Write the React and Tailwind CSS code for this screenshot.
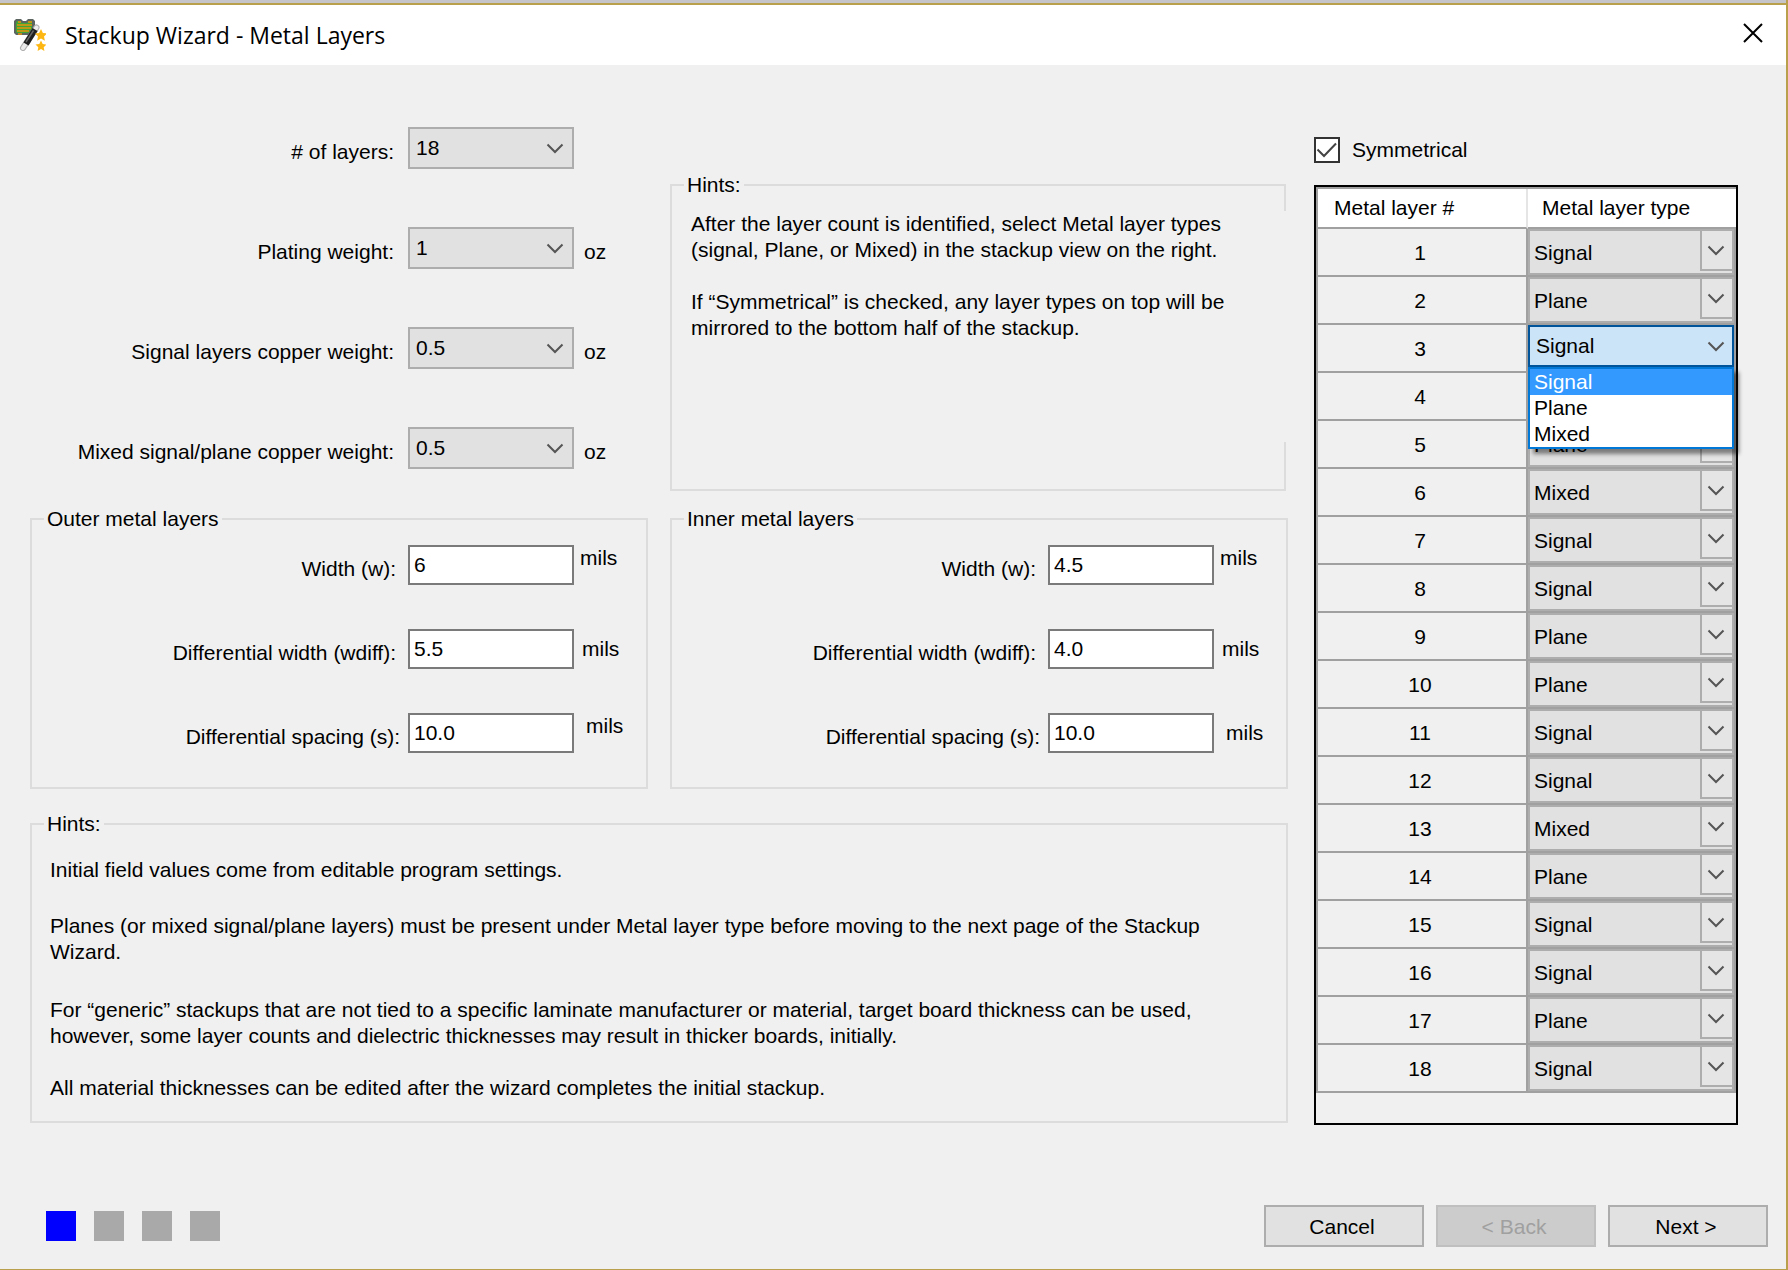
import React, { Component } from 'react';

const LAYERS = [
  'Signal', 'Plane', 'Signal', 'Signal', 'Plane', 'Mixed',
  'Signal', 'Signal', 'Plane', 'Plane', 'Signal', 'Signal',
  'Mixed', 'Plane', 'Signal', 'Signal', 'Plane', 'Signal',
];

const TYPES = ['Signal', 'Plane', 'Mixed'];

const Chevron = () => (
  <svg width="18" height="11" viewBox="0 0 18 11" fill="none" stroke="#555" strokeWidth="2">
    <path d="M1.5 1.5 L9 9 L16.5 1.5" />
  </svg>
);

const WizardIcon = () => (
  <svg width="32" height="32" viewBox="0 0 32 32">
    <path d="M2 0h5l2 2h3l2-2h5l2 2v9l-5 5H2L0 14V2z" fill="#5d6560" />
    <path d="M3 2h3l2 2h5l2-2h3v8l-4 4H3L2 13V4z" fill="#3fa535" />
    <path d="M3 6h15M3 9h14M3 12h12M4 15h4M4 3h3M14 3h4" stroke="#e8940c" strokeWidth="1.5" />
    <path d="M22.5 8.500 L9 29" stroke="#b0b0b0" strokeWidth="6" strokeLinecap="round" />
    <path d="M22.5 8.500 L9 29" stroke="#ececec" strokeWidth="4" strokeLinecap="round" />
    <path d="M21 10.500 L12 25" stroke="#1f1f1f" strokeWidth="6" />
    <path d="M19.500 11.500 L12 23" stroke="#666" strokeWidth="1.400" />
    <path d="M27 10l1.900 3.900 4.100.500-3 3 .900 4.300-3.900-2.100-3.900 2.100.900-4.300-3-3 4.100-.500z" fill="#fdb714" />
    <path d="M27 21.500l1.700 3.500 3.800.500-2.800 2.700.700 3.800-3.400-1.900-3.400 1.900.700-3.800-2.800-2.700 3.800-.500z" fill="#fdb714" />
  </svg>
);

const GroupBox = ({ title, className, children }) => (
  <fieldset className={`min-w-0 border-2 border-[#dcdcdc] ${className}`}>
    <legend className="ml-3 px-[3px]">{title}</legend>
    {children}
  </fieldset>
);

const WeightRow = ({ id, label, value, options, unit }) => (
  <div className="flex items-center">
    <label htmlFor={id} className="flex-1 pt-2 pr-3.5 text-right">{label}</label>
    <div className="relative w-[166px]">
      <select id={id} defaultValue={value} className="block h-[42px] w-full appearance-none border-2 border-[#adadad] bg-[#e1e1e1] pl-1.5">
        {options.map((o) => <option key={o}>{o}</option>)}
      </select>
      <span className="pointer-events-none absolute top-4 right-2.5"><Chevron /></span>
    </div>
    <span className="w-[74px] pt-2 pl-2.5">{unit}</span>
  </div>
);

const WidthRow = ({ id, label, value, labelPad = 'pr-3', unitClass }) => (
  <div className="flex items-center">
    <label htmlFor={id} className={`flex-1 pt-2 text-right ${labelPad}`}>{label}</label>
    <input id={id} type="text" defaultValue={value} className="h-10 w-[166px] border-2 border-[#7a7a7a] bg-white px-1" />
    <span className={`w-[72px] ${unitClass}`}>mils</span>
  </div>
);

const LayerSelect = ({ layer, type }) => (
  <div className="relative h-[46px]">
    <select aria-label={`Metal layer ${layer} type`} defaultValue={type} className="block h-full w-full appearance-none border-2 border-[#adadad] bg-[#e1e1e1] pt-0.5 pl-1">
      {TYPES.map((t) => <option key={t}>{t}</option>)}
    </select>
    <span className="pointer-events-none absolute top-0.5 right-0.5 flex h-10 w-8 items-center justify-center border-b-2 border-l-2 border-[#adadad] bg-[#e5e5e5] pr-0.5">
      <Chevron />
    </span>
  </div>
);

const OpenLayerSelect = ({ layer, type }) => (
  <div className="relative h-[46px]">
    <select aria-label={`Metal layer ${layer} type`} defaultValue={type} className="block h-[42px] w-full appearance-none border-2 border-[#005499] bg-[#cce4f7] pl-1.5">
      {TYPES.map((t) => <option key={t}>{t}</option>)}
    </select>
    <span className="pointer-events-none absolute top-4 right-[9px]"><Chevron /></span>
    <ul role="listbox" aria-label="Layer types" className="absolute top-[42px] left-0 z-10 w-full border-2 border-[#0078d7] bg-white shadow-[5px_5px_4px_rgba(0,0,0,0.45)]">
      {TYPES.map((t) => (
        <li key={t} role="option" aria-selected={t === type} className={t === type ? 'bg-[#3399ff] pl-1 text-white' : 'pl-1'}>{t}</li>
      ))}
    </ul>
  </div>
);

class App extends Component {

  constructor() {
    super();
    this.state = {
      symmetrical: true,
      openLayer: 3,
      step: 0,
    };
  }

  toggleSymmetrical = () => {
    this.setState({ symmetrical: !this.state.symmetrical });
  }

  render() {
    const { symmetrical, openLayer, step } = this.state;

    return (
      <div className="flex min-h-screen flex-col border-r-2 border-b border-[#b8a04c] bg-[#f0f0f0] font-['Liberation_Sans',Arial,sans-serif] text-[21px] leading-[26px] text-black">
        <div className="h-[3px] bg-[#c6c6ca]" />
        <header className="flex h-[62px] items-center border-t-2 border-[#b8a04c] bg-white pr-[23px] pl-3.5">
          <WizardIcon />
          <h1 className="flex-1 pl-[19px] font-['Open_Sans',sans-serif] text-[23px]">Stackup Wizard - Metal Layers</h1>
          <button type="button" aria-label="Close" className="pb-1">
            <svg width="20" height="20" viewBox="0 0 20 20" stroke="#000" strokeWidth="2">
              <path d="M1 1 L19 19 M19 1 L1 19" />
            </svg>
          </button>
        </header>

        <main className="flex items-start gap-[26px] pr-12 pl-[30px]">
          <div className="flex-1">
            <div className="grid grid-cols-2 gap-x-[22px]">
              <div className="flex flex-col gap-[58px] pt-[62px]">
                <WeightRow id="layers" label="# of layers:" value="18" options={['16', '18', '20']} />
                <WeightRow id="plating" label="Plating weight:" value="1" options={['0.5', '1', '2']} unit="oz" />
                <WeightRow id="signal" label="Signal layers copper weight:" value="0.5" options={['0.5', '1', '2']} unit="oz" />
                <WeightRow id="mixed" label="Mixed signal/plane copper weight:" value="0.5" options={['0.5', '1', '2']} unit="oz" />
              </div>

              <GroupBox title="Hints:" className="mt-[107px] mr-0.5 pt-[13px] pb-[47px]">
                {/* the hint label is wider than the box and hides part of its edge */}
                <div className="-mr-0.5 min-h-[231px] bg-[#f0f0f0] pl-[19px]">
                  <p>After the layer count is identified, select Metal layer types<br />(signal, Plane, or Mixed) in the stackup view on the right.</p>
                  <p className="mt-[26px]">If “Symmetrical” is checked, any layer types on top will be<br />mirrored to the bottom half of the stackup.</p>
                </div>
              </GroupBox>
            </div>

            <div className="mt-[15px] grid grid-cols-2 gap-x-[22px]">
              <GroupBox title="Outer metal layers" className="flex flex-col gap-11 pt-[13px] pb-[34px]">
                <WidthRow id="outer-w" label="Width (w):" value="6" unitClass="self-start pl-1.5" />
                <WidthRow id="outer-wdiff" label="Differential width (wdiff):" value="5.5" unitClass="pl-2" />
                <WidthRow id="outer-s" label="Differential spacing (s):" value="10.0" labelPad="pr-2" unitClass="self-start pl-3" />
              </GroupBox>
              <GroupBox title="Inner metal layers" className="flex flex-col gap-11 pt-[13px] pb-[34px]">
                <WidthRow id="inner-w" label="Width (w):" value="4.5" unitClass="self-start pl-1.5" />
                <WidthRow id="inner-wdiff" label="Differential width (wdiff):" value="4.0" unitClass="pl-2" />
                <WidthRow id="inner-s" label="Differential spacing (s):" value="10.0" labelPad="pr-2" unitClass="pl-3" />
              </GroupBox>
            </div>

            <GroupBox title="Hints:" className="mt-[22px] pt-5 pb-5">
              <div className="pl-[18px]">
                <p>Initial field values come from editable program settings.</p>
                <p className="mt-[30px]">Planes (or mixed signal/plane layers) must be present under Metal layer type before moving to the next page of the Stackup<br />Wizard.</p>
                <p className="mt-8">For “generic” stackups that are not tied to a specific laminate manufacturer or material, target board thickness can be used,<br />however, some layer counts and dielectric thicknesses may result in thicker boards, initially.</p>
                <p className="mt-[26px]">All material thicknesses can be edited after the wizard completes the initial stackup.</p>
              </div>
            </GroupBox>
          </div>

          <div className="w-[424px] pt-[72px]">
            <label className="flex items-center gap-3">
              <span className="relative h-[26px] w-[26px]">
                <input type="checkbox" checked={symmetrical} onChange={this.toggleSymmetrical} className="block h-full w-full appearance-none border-2 border-[#333] bg-white" />
                {symmetrical ?
                  <svg className="pointer-events-none absolute top-0 left-0" width="26" height="26" viewBox="0 0 26 26" fill="none" stroke="#444" strokeWidth="2">
                    <path d="M3.500 12.500 L10 19 L22 6.500" />
                  </svg>
                  : ''}
              </span>
              Symmetrical
            </label>

            <div className="mt-[22px] border-2 border-black pb-[30px]">
              <table className="w-full table-fixed border-separate border-spacing-0 border-t-2 border-l-2 border-[#a0a0a0]">
                <thead>
                  <tr className="h-10 bg-white text-left">
                    <th className="w-[210px] border-r-2 border-b-2 border-r-[#e5e5e5] border-b-[#a0a0a0] p-0 pl-4 font-normal">Metal layer #</th>
                    <th className="border-b-2 border-[#a0a0a0] p-0 pl-3.5 font-normal">Metal layer type</th>
                  </tr>
                </thead>
                <tbody>
                  {LAYERS.map((type, i) => (
                    <tr key={i} className="h-12">
                      <td className="border-r-2 border-b-2 border-[#a0a0a0] p-0 pt-0.5 pr-1 text-center">{i + 1}</td>
                      <td className="border-r-2 border-b-2 border-[#a0a0a0] p-0">
                        {openLayer === i + 1 ?
                          <OpenLayerSelect layer={i + 1} type={type} />
                          : <LayerSelect layer={i + 1} type={type} />}
                      </td>
                    </tr>
                  ))}
                </tbody>
              </table>
            </div>
          </div>
        </main>

        <footer className="mt-20 flex items-center justify-between pr-[18px] pb-[22px] pl-[46px]">
          <div className="flex gap-[18px]">
            {[0, 1, 2, 3].map((n) => (
              <span key={n} className={n === step ? 'h-[30px] w-[30px] bg-[#0000ff]' : 'h-[30px] w-[30px] bg-[#a9a9a9]'} />
            ))}
          </div>
          <div className="flex gap-3">
            <button type="button" className="h-[42px] w-40 border-2 border-[#adadad] bg-[#e1e1e1] pt-0.5 pr-1">Cancel</button>
            <button type="button" disabled className="h-[42px] w-40 border-2 border-[#bfbfbf] bg-[#cccccc] pt-0.5 pr-1 text-[#a0a0a0]">&lt; Back</button>
            <button type="button" className="h-[42px] w-40 border-2 border-[#adadad] bg-[#e1e1e1] pt-0.5 pr-1">Next &gt;</button>
          </div>
        </footer>
      </div>
    );
  }
}

export default App;
